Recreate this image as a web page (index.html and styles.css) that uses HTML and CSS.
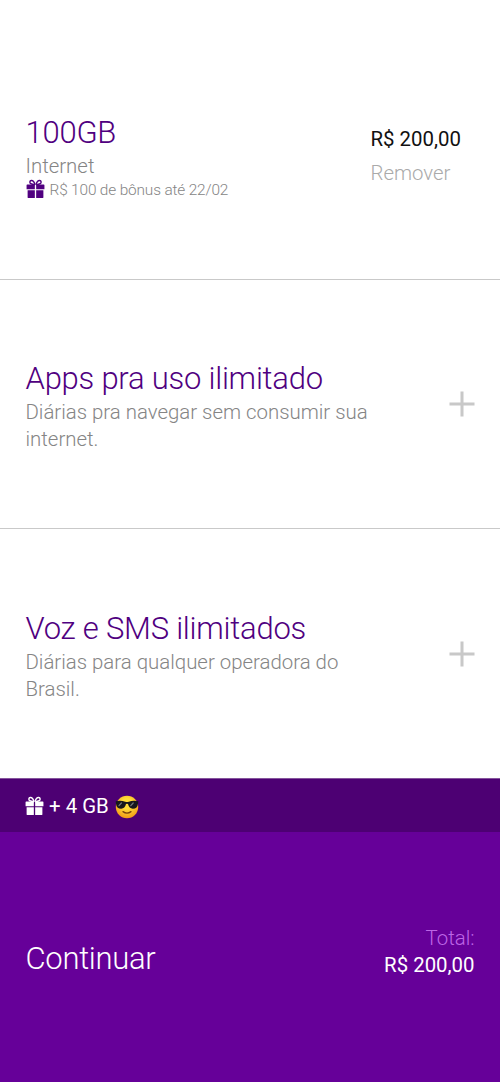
FILE: index.html
```html
<!DOCTYPE html>
<html lang="pt-BR">
<head>
<meta charset="utf-8">
<title>Pacotes</title>
<link rel="stylesheet" href="styles.css">
</head>
<body>
<svg class="defs" aria-hidden="true">
  <symbol id="gift" viewBox="0 0 20 20">
    <g fill="none" stroke="currentColor" stroke-width="1.5">
      <path d="M9.5 5.5C8.8 2.7 7.3.9 5.6 1C3.8 1.2 3.6 3.5 5 4.4C6.2 5.2 8 5.4 9.5 5.5"/>
      <path d="M10.5 5.5C11.2 2.7 12.7.9 14.4 1C16.2 1.2 16.4 3.5 15 4.4C13.8 5.2 12 5.4 10.5 5.5"/>
    </g>
    <path fill="currentColor" d="M1.3 5.3H9.3V10.3H.6V6Q.6 5.3 1.3 5.3ZM10.7 5.3H18.7Q19.4 5.3 19.4 6V10.3H10.7ZM1.7 11.3H9.3V19.5H2.6Q1.7 19.5 1.7 18.6ZM10.7 11.3H18.3V18.6Q18.3 19.5 17.4 19.5H10.7Z"/>
  </symbol>
</svg>
<main class="screen">
  <section class="item">
    <div class="item-info">
      <h2 class="title">100GB</h2>
      <p class="desc">Internet</p>
      <p class="bonus"><svg class="gift"><use href="#gift"/></svg><span>R$ 100 de bônus até 22/02</span></p>
    </div>
    <div class="item-price">
      <span class="price">R$ 200,00</span>
      <span class="remove">Remover</span>
    </div>
  </section>
  <section class="item">
    <div class="item-info">
      <h2 class="title">Apps pra uso ilimitado</h2>
      <p class="desc">Diárias pra navegar sem consumir sua<br>internet.</p>
    </div>
    <svg class="plus" viewBox="0 0 26 26"><path d="M13 .5V25.5M.5 13H25.5"/></svg>
  </section>
  <section class="item">
    <div class="item-info">
      <h2 class="title">Voz e SMS ilimitados</h2>
      <p class="desc">Diárias para qualquer operadora do<br>Brasil.</p>
    </div>
    <svg class="plus" viewBox="0 0 26 26"><path d="M13 .5V25.5M.5 13H25.5"/></svg>
  </section>
  <div class="extra">
    <svg class="gift"><use href="#gift"/></svg>
    <span class="extra-text">+ 4 GB</span>
    <svg class="cool" viewBox="0 0 24 24">
      <defs><radialGradient id="face" cx=".5" cy=".35" r=".65"><stop offset=".35" stop-color="#ffdc38"/><stop offset="1" stop-color="#f39a16"/></radialGradient></defs>
      <circle cx="12" cy="12" r="11.2" fill="url(#face)"/>
      <path fill="#16171c" d="M.7 6.2Q6 5 10.2 6.7Q12 7.3 13.8 6.7Q18 5 23.3 6.2L23.1 8.2Q22.5 13.7 17.8 13.7Q14.1 13.6 13 9.1Q12 8.3 11 9.1Q9.9 13.6 6.2 13.7Q1.5 13.7.9 8.2Z"/>
      <path stroke="#71767b" stroke-width="1.2" stroke-linecap="round" d="M4 10.7L6.4 8M15.8 10.7L18.2 8"/>
      <path fill="none" stroke="#79420b" stroke-width="1.3" stroke-linecap="round" d="M8 16.6Q12 19.5 16 16.6"/>
    </svg>
  </div>
  <footer class="checkout">
    <span class="continue">Continuar</span>
    <div class="total"><span class="total-label">Total:</span><span class="total-value">R$ 200,00</span></div>
  </footer>
</main>
</body>
</html>
```
FILE: styles.css
```css
* { box-sizing: border-box; }
body { margin: 0; background: #fff; font-family: Roboto, sans-serif; }
h2, p { margin: 0; }
svg { display: block; flex: none; }
.defs { display: none; }
.screen { width: 500px; height: 1082px; display: grid; grid-template-rows: 280px 249px 249px 54px 250px; }
.item { display: flex; justify-content: space-between; padding: 83px 25px 0 25.5px; border-bottom: 1px solid #c9c9c9; white-space: nowrap; }
.item:first-child { padding-top: 117px; }
.item:nth-child(3) { border-bottom: 0; padding-top: 84px; }
.title { font-size: 31px; line-height: 32px; font-weight: 300; letter-spacing: -.23px; color: #500080; }
.desc { font-size: 20.4px; line-height: 27px; font-weight: 300; color: #858585; padding-top: 4px; }
.bonus { display: flex; align-items: center; gap: 5px; height: 20px; margin-top: -1px; font-size: 15.4px; letter-spacing: -.15px; font-weight: 300; color: #858585; }
.bonus span { padding-top: 2px; }
.gift { width: 19px; height: 20px; color: #500080; }
.item-price { width: 104.5px; padding-top: 10px; display: flex; flex-direction: column; gap: 10px; font-size: 20.4px; line-height: 24px; }
.price { color: #111; }
.remove { color: #aaa; font-weight: 300; }
.plus { width: 26px; height: 26px; margin-top: 28px; fill: none; stroke: #c8c8c8; stroke-width: 3; }
.extra { display: flex; align-items: center; padding: 0 25px; background: #4d0073; color: #fff; border-top: 1px solid #85549c; }
.extra .gift { color: #fff; }
.extra-text { font-size: 20.4px; padding-top: 1px; margin: 0 6px 0 5px; }
.cool { width: 24px; height: 24px; margin-top: 2px; }
.checkout { display: flex; justify-content: space-between; align-items: center; padding: 0 25.5px; background: #660099; color: #fff; }
.continue { font-size: 31px; line-height: 36px; font-weight: 300; letter-spacing: -.3px; padding-top: 4px; }
.total { display: flex; flex-direction: column; align-items: flex-end; font-size: 20.4px; line-height: 27px; margin-top: -10px; }
.total-label { color: #bd66e6; font-weight: 300; }
```
